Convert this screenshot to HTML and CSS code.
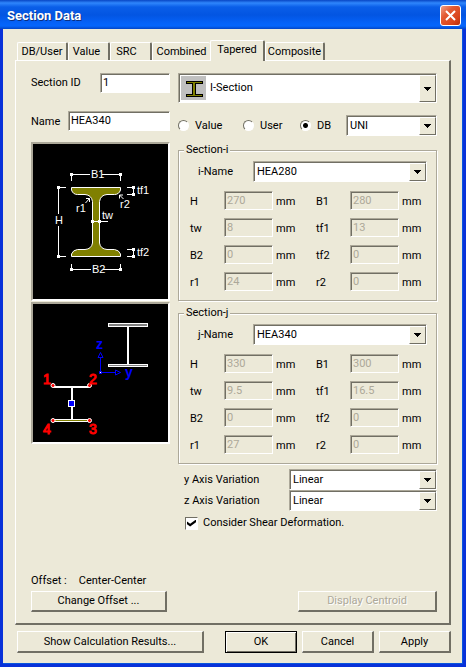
FILE: index.html
```html
<!DOCTYPE html>
<html lang="en">
<head>
<meta charset="utf-8">
<title>Section Data</title>
<link rel="stylesheet" href="styles.css">
</head>
<body>
<main class="window">
  <header class="titlebar">
    <h1>Section Data</h1>
    <button class="close" type="button" aria-label="Close">
      <svg viewBox="0 0 11 11" width="11" height="11"><path d="M1 1L10 10M10 1L1 10" stroke="#fff" stroke-width="2" fill="none"/></svg>
    </button>
  </header>

  <form class="dialog">
    <nav class="tabs">
      <button type="button" class="tab tab-db">DB/User</button>
      <button type="button" class="tab tab-value">Value</button>
      <button type="button" class="tab tab-src">SRC</button>
      <button type="button" class="tab tab-combined">Combined</button>
      <button type="button" class="tab tab-tapered selected">Tapered</button>
      <button type="button" class="tab tab-composite">Composite</button>
    </nav>

    <section class="panel">
      <div class="columns">
        <div class="left">
          <div class="id-row">
            <label for="sid">Section ID</label>
            <input class="box id-box" id="sid" value="1">
          </div>
          <div class="name-row">
            <label for="name">Name</label>
            <input class="box" id="name" value="HEA340">
          </div>
          <div class="picture shape">
            <svg viewBox="33 144 135 155" role="img" aria-label="I-section dimensions">
              <path d="M71.5 187.5H120.5V190Q119 194.5 114.5 194.5H107Q100.5 195 99.5 201.500V243Q100.500 249 107 249.500H114.500Q119 250 120.500 254V256.500H71.500V254Q73 250 77.500 249.500H85Q91.500 249 92.500 243V201.500Q91.500 195 85 194.500H77.500Q73 194.500 71.500 190Z" fill="#808000" stroke="#fff"/>
              <g stroke="#fff" fill="none" shape-rendering="crispEdges">
                <path d="M71.500 180.500V174.500H90M102 174.500H120.500V180.500"/>
                <path d="M71.500 263.500V269.500H91M103 269.500H120.500V263.500"/>
                <path d="M65.500 187.500H58.500V214M58.500 226V256.500H65.500"/>
                <path d="M127 187.500H133.500V194.500H127"/>
                <path d="M127 249.500H133.500V256.500H127"/>
                <path d="M92 221.500H108"/>
              </g>
              <g stroke="#fff" fill="none">
                <path d="M85.500 203L89.500 198.500M86 198.500H89.500V202"/>
                <path d="M123.500 199L119.500 195M123 195H119.500V198.500"/>
              </g>
              <path fill="#fff" d="M70 173h3v3h-3zM119 173h3v3h-3zM70 268h3v3h-3zM119 268h3v3h-3zM57 186h3v3h-3zM57 255h3v3h-3zM132 186h3v3h-3zM132 193h3v3h-3zM132 248h3v3h-3zM132 255h3v3h-3zM91 220h3v3h-3zM98 220h3v3h-3z"/>
              <g class="dims">
                <text x="91" y="178">B1</text>
                <text x="92" y="273">B2</text>
                <text x="55" y="224">H</text>
                <text x="137" y="194">tf1</text>
                <text x="137" y="256">tf2</text>
                <text x="102" y="219">tw</text>
                <text x="76" y="212">r1</text>
                <text x="120" y="208">r2</text>
              </g>
            </svg>
          </div>
          <div class="picture">
            <svg viewBox="33 304 135 138" role="img" aria-label="Section position">
              <g shape-rendering="crispEdges">
                <path fill="#fff" d="M108 323h40v4h-40zM127 327h2v37h-2zM108 364h40v3h-40zM53 386h37v2h-37zM71 388h2v31h-2zM53 419h37v3h-37z"/>
                <path fill="#808080" d="M109 324h38v2h-38zM109 365h38v1h-38z"/>
                <path fill="#808000" d="M55 420h32v1h-32z"/>
                <path fill="#fff" d="M68 400h7v7h-7z"/>
                <path fill="#00f" d="M69 401h5v5h-5z"/>
              </g>
              <g fill="#f00" stroke="#fff">
                <circle cx="53" cy="385.500" r="2"/><circle cx="89.500" cy="385.500" r="2"/>
                <circle cx="53" cy="420.500" r="2"/><circle cx="89.500" cy="420.500" r="2"/>
              </g>
              <g fill="none" stroke="#00f">
                <path d="M100.500 372V358M102 372.500H115M98 357.500L100.500 352.500L103 357.500ZM115.500 370L120.500 372.500L115.500 375Z"/>
                <path d="M99.500 371.500h2v2h-2z" fill="#fff"/>
              </g>
              <g class="axes"><text x="96" y="349">z</text><text x="125" y="377">y</text></g>
              <g class="nodes">
                <text x="43" y="384">1</text><text x="89" y="384">2</text>
                <text x="43" y="434">4</text><text x="89" y="434">3</text>
              </g>
            </svg>
          </div>
        </div>

        <div class="right">
          <div class="combo big">
            <svg class="thumb" viewBox="0 0 25 24" width="25" height="24" aria-hidden="true" shape-rendering="crispEdges">
              <path fill="#c0c0c0" d="M0 0h25v24H0z"/>
              <path fill="#000" d="M5 5h17v3H5zM11 8h4v10h-4zM5 18h17v3H5z"/>
              <path fill="#808000" d="M6 6h15v1H6zM12 7h2v12h-2zM6 19h15v1H6z"/>
            </svg>
            <select aria-label="Section shape"><option>I-Section</option></select>
            <span class="drop"><svg viewBox="0 0 7 4" width="7" height="4"><path d="M0 0h7v1H6v1H5v1H4v1H3V3H2V2H1V1H0z"/></svg></span>
          </div>

          <div class="source-row">
            <label class="choice"><input type="radio" name="src">Value</label>
            <label class="choice"><input type="radio" name="src">User</label>
            <label class="choice"><input type="radio" name="src" checked>DB</label>
            <div class="combo">
              <select aria-label="Database"><option>UNI</option></select>
              <span class="drop"><svg viewBox="0 0 7 4" width="7" height="4"><path d="M0 0h7v1H6v1H5v1H4v1H3V3H2V2H1V1H0z"/></svg></span>
            </div>
          </div>

          <fieldset class="group">
            <legend>Section-i</legend>
            <div class="name-line">
              <label for="in">i-Name</label>
              <div class="combo">
                <select id="in"><option>HEA280</option></select>
                <span class="drop"><svg viewBox="0 0 7 4" width="7" height="4"><path d="M0 0h7v1H6v1H5v1H4v1H3V3H2V2H1V1H0z"/></svg></span>
              </div>
            </div>
            <div class="sizes">
              <label for="i-h">H</label><input class="box" id="i-h" value="270" disabled><span>mm</span>
              <label for="i-b1">B1</label><input class="box" id="i-b1" value="280" disabled><span>mm</span>
              <label for="i-tw">tw</label><input class="box" id="i-tw" value="8" disabled><span>mm</span>
              <label for="i-tf1">tf1</label><input class="box" id="i-tf1" value="13" disabled><span>mm</span>
              <label for="i-b2">B2</label><input class="box" id="i-b2" value="0" disabled><span>mm</span>
              <label for="i-tf2">tf2</label><input class="box" id="i-tf2" value="0" disabled><span>mm</span>
              <label for="i-r1">r1</label><input class="box" id="i-r1" value="24" disabled><span>mm</span>
              <label for="i-r2">r2</label><input class="box" id="i-r2" value="0" disabled><span>mm</span>
            </div>
          </fieldset>

          <fieldset class="group">
            <legend>Section-j</legend>
            <div class="name-line">
              <label for="jn">j-Name</label>
              <div class="combo">
                <select id="jn"><option>HEA340</option></select>
                <span class="drop"><svg viewBox="0 0 7 4" width="7" height="4"><path d="M0 0h7v1H6v1H5v1H4v1H3V3H2V2H1V1H0z"/></svg></span>
              </div>
            </div>
            <div class="sizes">
              <label for="j-h">H</label><input class="box" id="j-h" value="330" disabled><span>mm</span>
              <label for="j-b1">B1</label><input class="box" id="j-b1" value="300" disabled><span>mm</span>
              <label for="j-tw">tw</label><input class="box" id="j-tw" value="9.5" disabled><span>mm</span>
              <label for="j-tf1">tf1</label><input class="box" id="j-tf1" value="16.5" disabled><span>mm</span>
              <label for="j-b2">B2</label><input class="box" id="j-b2" value="0" disabled><span>mm</span>
              <label for="j-tf2">tf2</label><input class="box" id="j-tf2" value="0" disabled><span>mm</span>
              <label for="j-r1">r1</label><input class="box" id="j-r1" value="27" disabled><span>mm</span>
              <label for="j-r2">r2</label><input class="box" id="j-r2" value="0" disabled><span>mm</span>
            </div>
          </fieldset>

          <div class="axis-rows">
            <label for="ya">y Axis Variation</label>
            <div class="combo">
              <select id="ya"><option>Linear</option></select>
              <span class="drop"><svg viewBox="0 0 7 4" width="7" height="4"><path d="M0 0h7v1H6v1H5v1H4v1H3V3H2V2H1V1H0z"/></svg></span>
            </div>
            <label for="za">z Axis Variation</label>
            <div class="combo">
              <select id="za"><option>Linear</option></select>
              <span class="drop"><svg viewBox="0 0 7 4" width="7" height="4"><path d="M0 0h7v1H6v1H5v1H4v1H3V3H2V2H1V1H0z"/></svg></span>
            </div>
          </div>
          <label class="shear"><input type="checkbox" checked>Consider Shear Deformation.</label>
        </div>
      </div>

      <div class="offset">
        <p><span>Offset :</span><span>Center-Center</span></p>
        <div class="offset-buttons">
          <button type="button" class="btn change">Change Offset ...</button>
          <button type="button" class="btn centroid" disabled>Display Centroid</button>
        </div>
      </div>
    </section>

    <footer class="actions">
      <button type="button" class="btn results">Show Calculation Results...</button>
      <button type="button" class="btn default">OK</button>
      <button type="button" class="btn">Cancel</button>
      <button type="button" class="btn">Apply</button>
    </footer>
  </form>
</main>
</body>
</html>
```
FILE: styles.css
```css
:root {
  --face: #ece9d8;
  --shade: #aca899;
  --dark: #716f64;
}

* { box-sizing: border-box; }

body {
  margin: 0;
  background: var(--face);
  color: #000;
  font: 11px/14px Roboto, "Noto Sans", sans-serif;
}

button, input, select { font: inherit; color: inherit; margin: 0; }

.window {
  display: flex;
  flex-direction: column;
  min-height: 100vh;
  background: #0831d9;
}

.titlebar {
  display: flex;
  align-items: center;
  justify-content: space-between;
  height: 29px;
  padding: 2px 5px 0 7px;
  background: linear-gradient(#0846c4, #2f86fc 3px, #0a5ee8 7px, #0355e2 15px, #0562f8 23px, #0566fc 26px, #0345c6);
}

.titlebar h1 {
  margin: 0;
  color: #fff;
  font: bold 13px/18px Roboto, "Noto Sans", sans-serif;
  text-shadow: 1px 1px #0b2f80;
}

.close {
  display: grid;
  place-items: center;
  width: 21px;
  height: 21px;
  padding: 0;
  border: 1px solid #fff;
  border-radius: 3px;
  background: linear-gradient(135deg, #f0a088, #e35a32 35%, #d8431a 75%, #b82c08);
}

.dialog {
  flex: 1;
  display: flex;
  flex-direction: column;
  margin: 0 3px 3px;
  padding: 11px 11px 10px 12px;
  background: var(--face);
  border: solid #0855dd;
  border-width: 0 1px 1px 0;
}

.tabs {
  display: flex;
  align-items: flex-end;
  padding-left: 2px;
}

.tab {
  height: 18px;
  padding: 0;
  border: solid;
  border-width: 1px 2px 0 1px;
  border-color: #fff var(--dark) #fff #fff;
  border-radius: 2px 2px 0 0;
  background: var(--face);
  text-align: center;
  white-space: nowrap;
}

.tab-db { width: 51px; }
.tab-value { width: 42px; padding-right: 4px; }
.tab-src { width: 42px; padding-right: 8px; }
.tab-combined { width: 58px; border-right-width: 0; }
.tab-composite { width: 60px; }
.tab-tapered { width: 55px; }

.tab.selected {
  height: 21px;
  margin-bottom: -1px;
  padding-bottom: 3px;
  z-index: 1;
}

.panel {
  flex: 1;
  display: flex;
  flex-direction: column;
  justify-content: space-between;
  padding: 12px 12px 11px 15px;
  border: solid;
  border-width: 1px 2px 2px 1px;
  border-color: #fff var(--dark) var(--dark) #fff;
}

.columns {
  display: grid;
  grid-template-columns: 139px 1fr;
  gap: 8px;
}

.id-row, .name-row { display: flex; }

.id-row { justify-content: space-between; line-height: 20px; }
.id-row .id-box { width: 70px; }
.name-row { margin-top: 18px; line-height: 22px; }
.name-row label { width: 37px; flex: none; }

.box {
  width: 100%;
  min-width: 0;
  height: 20px;
  padding: 0 2px;
  border: 1px solid;
  border-color: var(--shade) #fff #fff var(--shade);
  border-radius: 0;
  box-shadow: inset 1px 1px var(--dark);
  background: #fff;
}

.box:disabled { background: var(--face); color: var(--shade); }

.picture {
  margin-top: 1px;
  border: 2px solid;
  border-color: var(--shade) #fff #fff var(--shade);
  background: #000;
}

.picture.shape { margin-top: 9px; }
.picture svg { display: block; width: 100%; height: auto; }

.dims { fill: #fff; font: 11px "Liberation Sans", sans-serif; }
.axes { fill: #00f; font: bold 14px "Liberation Sans", sans-serif; }
.nodes { fill: #f00; font: 14px "Liberation Sans", sans-serif; stroke: #f00; }

.combo {
  position: relative;
  height: 21px;
  padding: 1px;
  border: 1px solid;
  border-color: var(--shade) #fff #fff var(--shade);
  box-shadow: inset 1px 1px var(--dark);
  background: #fff;
}

.combo select {
  appearance: none;
  display: block;
  width: 100%;
  height: 100%;
  padding: 0 18px 0 2px;
  border: 0;
  border-radius: 0;
  background: transparent;
}

.combo .drop {
  position: absolute;
  top: 1px;
  right: 0;
  bottom: 0;
  display: grid;
  place-items: center;
  width: 17px;
  border: 1px solid;
  border-color: #fff var(--dark) var(--dark) #fff;
  background: var(--face);
  pointer-events: none;
}

.combo.big { height: 30px; }
.combo.big select { padding-left: 30px; }
.combo.big .thumb { position: absolute; top: 2px; left: 2px; }

.source-row {
  display: grid;
  grid-template-columns: 65px 57px 46px 1fr;
  align-items: center;
  margin-top: 12px;
}

.choice, .shear { display: flex; align-items: center; }
.choice { gap: 6px; }

.choice input {
  appearance: none;
  width: 11px;
  height: 11px;
  border: 1px solid;
  border-color: var(--dark) #fff #fff var(--dark);
  border-radius: 50%;
  background: #fff;
}

.choice input:checked { background: radial-gradient(circle, #000 2px, #fff 3px); }

.group {
  min-width: 0;
  margin: 7px 0 0;
  padding: 4px 9px 9px 11px;
  border: 1px solid var(--shade);
  box-shadow: 1px 1px #fff, inset 1px 1px #fff;
}

.group + .group { margin-top: 5px; }

.group legend {
  margin-left: -6px;
  padding: 0 2px;
  background: var(--face);
}

.name-line {
  display: grid;
  grid-template-columns: 55px 1fr;
  align-items: center;
  padding-left: 8px;
}

.sizes {
  display: grid;
  grid-template-columns: 34px 49px 43px 34px 49px 1fr;
  row-gap: 8px;
  align-items: center;
  margin-top: 9px;
}

.sizes .box { height: 19px; }
.sizes span { padding: 2px 0 0 3px; }
.sizes label { padding-top: 2px; }

.axis-rows {
  display: grid;
  grid-template-columns: 105px 1fr;
  align-items: center;
  margin-top: 5px;
  padding-left: 6px;
}

.shear { gap: 5px; margin: 5px 0 0 7px; }

.shear input {
  appearance: none;
  display: grid;
  place-items: center;
  width: 13px;
  height: 13px;
  border: 1px solid;
  border-color: var(--dark) #fff #fff var(--dark);
  background: #fff;
}

.shear input:checked::before {
  content: "";
  width: 9px;
  height: 7px;
  background: #000;
  clip-path: polygon(0 30%, 35% 62%, 100% 0, 100% 38%, 35% 100%, 0 68%);
}

.offset p { display: flex; gap: 12px; margin: 0 0 3px; }
.offset-buttons { display: flex; justify-content: space-between; }

.btn {
  height: 21px;
  padding: 0;
  border: solid;
  border-width: 1px 2px 2px 1px;
  border-color: #fff var(--dark) var(--dark) #fff;
  background: var(--face);
}

.btn:disabled { color: var(--shade); text-shadow: 1px 1px #fff; }
.change { width: 136px; }
.centroid { width: 139px; }

.actions {
  display: flex;
  gap: 5px;
  margin: 6px 0 0 2px;
}

.actions .btn { width: 72px; height: 22px; }
.actions .results { width: 187px; margin-right: auto; }

.actions .default {
  border: 1px solid #000;
  box-shadow: inset 1px 1px #fff, inset -1px -1px var(--dark);
}
```
